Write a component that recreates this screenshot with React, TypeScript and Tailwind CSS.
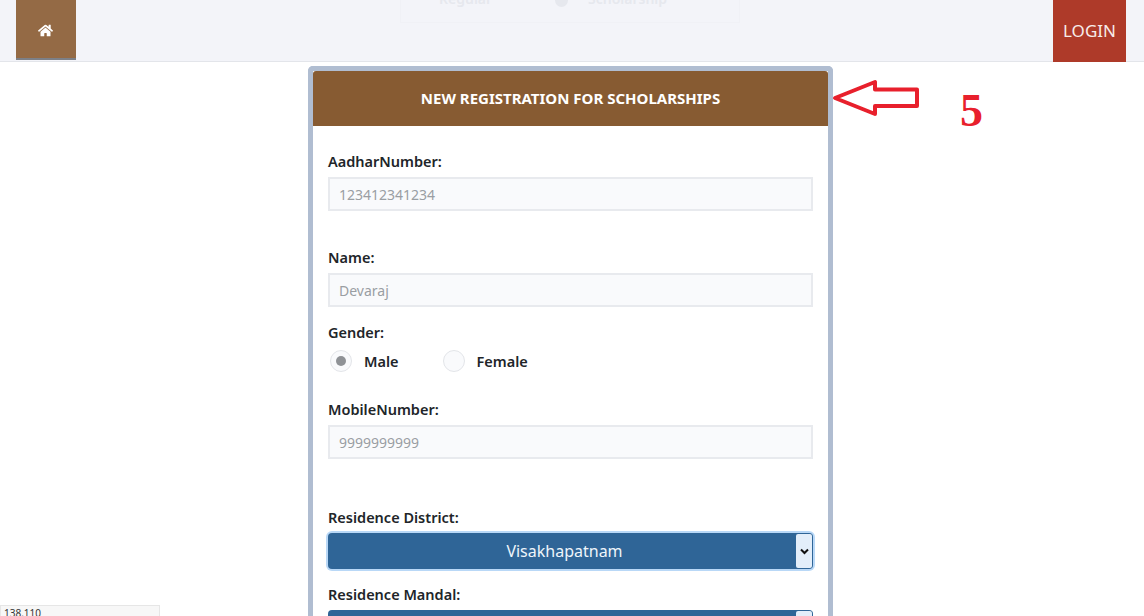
import { FaHome } from "react-icons/fa";

function Field({ label, value, className }: { label: string; value: string; className: string }) {
  return (
    <div className={className}>
      <div className="h-[20px] text-[14.5px] font-semibold leading-[20px] text-[#212529]">{label}</div>
      <div className="mt-[6px] flex h-[34px] items-center border-2 border-[#e8eaee] bg-[#f9fafc] px-[9px] text-[14px] text-[#9a9ea3]">
        {value}
      </div>
    </div>
  );
}

function Radio({ label, checked }: { label: string; checked?: boolean }) {
  return (
    <div className="flex items-center">
      <span className="flex h-[22px] w-[22px] items-center justify-center rounded-full border border-[#e3e5e9] bg-[#f9fafc]">
        {checked && <span className="h-[10px] w-[10px] rounded-full bg-[#8f9296]" />}
      </span>
      <span className="ml-[12px] text-[14.5px] font-semibold leading-[20px] text-[#212529]">{label}</span>
    </div>
  );
}

function SelectBox({ value, focused }: { value: string; focused?: boolean }) {
  return (
    <div
      className={`mt-[6px] flex h-[36px] items-stretch rounded-[4px] bg-[#2f6597] ${
        focused ? "shadow-[0_0_0_2px_#b9d8f7]" : ""
      }`}
    >
      <div className="flex-1 pl-[6px] text-center text-[16px] leading-[36px] text-[#eef5fb]">{value}</div>
      <div className="m-[1px] flex w-[16px] items-center justify-center rounded-[2px] bg-[#e3eefa]">
        <svg width="9" height="7" viewBox="0 0 9 7">
          <path d="M1 1.5 L4.5 5 L8 1.5" fill="none" stroke="#111" strokeWidth="2" />
        </svg>
      </div>
    </div>
  );
}

export default function App() {
  return (
    <div
      className="relative h-[616px] w-[1144px] overflow-hidden bg-white"
      style={{ fontFamily: '"Noto Sans", sans-serif' }}
    >
      {/* Top bar */}
      <div className="flex h-[62px] justify-between border-b border-[#e3e5ea] bg-[#f3f4f9] pl-[16px] pr-[18px]">
        <div className="flex h-[60px] w-[60px] items-center justify-center border-b-2 border-[#7d8087] bg-[#946a45] pr-[2px] pt-[2px] text-white">
          <FaHome size={15} />
        </div>
        <div className="flex h-[62px] w-[73px] items-center justify-center bg-[#ae3a29] text-[17px] text-[#f7ecea]">
          LOGIN
        </div>
      </div>

      {/* Faded panel behind the bar */}
      <div className="absolute left-[400px] top-0 flex h-[23px] w-[340px] border border-t-0 border-[#f0f1f6]">
        <span className="absolute left-[38px] top-[-12px] text-[14px] font-semibold text-[#e6e8ee]">Regular</span>
        <span className="absolute left-[154px] top-[-6px] h-[13px] w-[13px] rounded-full bg-[#e6e8ee]" />
        <span className="absolute left-[187px] top-[-12px] text-[14px] font-semibold text-[#e6e8ee]">Scholarship</span>
      </div>

      {/* Registration card */}
      <div className="ml-[308px] mt-[4px] w-[525px] rounded-t-[5px] border-[5px] border-b-0 border-[#b0bdd1] bg-white">
        <div className="flex h-[55px] items-center justify-center rounded-t-[3px] bg-[#875b32] text-[15px] font-bold text-white">
          NEW REGISTRATION FOR SCHOLARSHIPS
        </div>
        <div className="px-[15px] pt-[25px]">
          <Field label="AadharNumber:" value="123412341234" className="" />
          <Field label="Name:" value="Devaraj" className="mt-[36px]" />
          <div className="mt-[15px] h-[20px] text-[14.5px] font-semibold leading-[20px] text-[#212529]">Gender:</div>
          <div className="ml-[2px] mt-[8px] flex gap-[44px]">
            <Radio label="Male" checked />
            <Radio label="Female" />
          </div>
          <Field label="MobileNumber:" value="9999999999" className="mt-[27px]" />
          <div className="mt-[48px] h-[20px] text-[14.5px] font-semibold leading-[20px] text-[#212529]">
            Residence District:
          </div>
          <SelectBox value="Visakhapatnam" focused />
          <div className="mt-[15px] h-[20px] text-[14.5px] font-semibold leading-[20px] text-[#212529]">
            Residence Mandal:
          </div>
          <SelectBox value="" />
        </div>
      </div>

      {/* Annotation drawn over the screenshot */}
      <svg className="absolute left-[830px] top-[78px]" width="92" height="40" viewBox="0 0 92 40">
        <path
          d="M5 20 L45 4 L45 11.5 L87 11.5 L87 28 L45 28 L45 36 Z"
          fill="white"
          stroke="#e8202c"
          strokeWidth="4"
          strokeLinejoin="round"
        />
      </svg>
      <div
        className="absolute left-[960px] top-[84px] text-[46px] font-bold leading-[54px] text-[#e8202c]"
        style={{ fontFamily: '"Liberation Serif", serif' }}
      >
        5
      </div>

      {/* Status tooltip */}
      <div className="absolute left-0 top-[605px] h-[20px] w-[160px] border border-[#e6e6e6] bg-[#f7f7f7] pl-[3px] text-[10px] leading-[14px] text-[#333]">
        138.110
      </div>
    </div>
  );
}
